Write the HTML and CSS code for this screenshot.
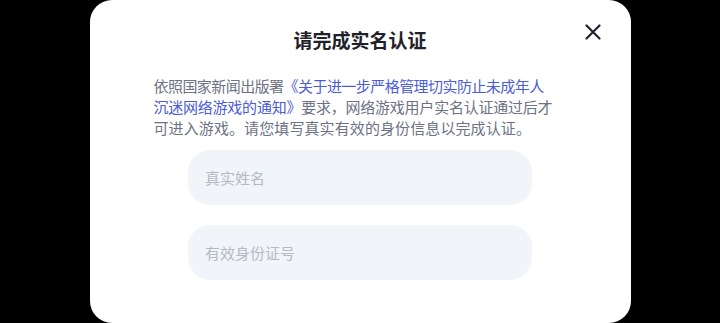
FILE: index.html
```html
<!DOCTYPE html>
<html lang="zh-CN">
<head>
<meta charset="utf-8">
<link rel="stylesheet" href="styles.css">
</head>
<body>
<div class="card">
  <div class="header">
    <h1 class="title">请完成实名认证</h1>
    <button class="close" aria-label="关闭">
      <svg width="16" height="16" viewBox="0 0 16 16"><path d="M1.5 1.5 L14.5 14.5 M14.5 1.5 L1.5 14.5" stroke="#1f2430" stroke-width="2.2" stroke-linecap="round" fill="none"/></svg>
    </button>
  </div>
  <p class="desc"><span class="line l1">依照国家新闻出版署<span class="link">《关于进一步严格管理切实防止未成年人</span></span><span class="line l2"><span class="link">沉迷网络游戏的通知》</span>要求，网络游戏用户实名认证通过后才</span><span class="line l3">可进入游戏。请您填写真实有效的身份信息以完成认证。</span></p>
  <div class="form">
    <div class="field">真实姓名</div>
    <div class="field">有效身份证号</div>
  </div>
</div>
</body>
</html>
```

FILE: styles.css
```css
html, body {
  margin: 0;
  padding: 0;
  background: #000;
  height: 323px;
  overflow: hidden;
}
body {
  font-family: "Noto Sans CJK SC", "Noto Sans", sans-serif;
}
.card {
  width: 541px;
  height: 323px;
  margin: 0 auto;
  background: #fff;
  border-radius: 22px;
  box-sizing: border-box;
  padding-top: 28px;
  display: flex;
  flex-direction: column;
  align-items: center;
  position: relative;
}
.header {
  width: 100%;
  display: flex;
  justify-content: center;
}
.title {
  margin: 0;
  font-size: 19px;
  line-height: 24px;
  font-weight: 700;
  color: #1f2329;
}
.close {
  position: absolute;
  top: 24px;
  right: 30px;
  width: 16px;
  height: 16px;
  padding: 0;
  border: 0;
  background: none;
  display: flex;
}
.desc {
  align-self: flex-start;
  margin: 23px 0 0 64px;
  white-space: nowrap;
  font-size: 15px;
  line-height: 21px;
  color: #6d7284;
}
.line {
  display: block;
}
.l1 {
  letter-spacing: -0.55px;
}
.l2 {
  letter-spacing: -0.23px;
}
.l3 {
  letter-spacing: 0.1px;
}
.link {
  color: #4b5cd8;
}
.form {
  margin-top: 12px;
  display: flex;
  flex-direction: column;
  gap: 20px;
}
.field {
  width: 344px;
  height: 55px;
  box-sizing: border-box;
  border-radius: 22px;
  background: #f1f4f8;
  padding-left: 17px;
  display: flex;
  align-items: center;
  font-size: 15px;
  color: #b5b9c6;
}
```
